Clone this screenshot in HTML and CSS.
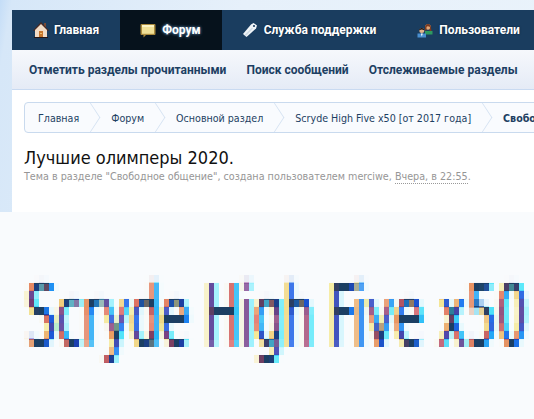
FILE: index.html
```html
<!DOCTYPE html>
<html lang="ru">
<head>
<meta charset="utf-8">
<title>Лучшие олимперы 2020.</title>
<link rel="stylesheet" href="styles.css">
</head>
<body>
<svg class="defs" width="0" height="0" aria-hidden="true">
  <filter id="mosaic" filterUnits="objectBoundingBox" x="0" y="0" width="100%" height="100%" color-interpolation-filters="sRGB">
    <feGaussianBlur in="SourceGraphic" stdDeviation="2.2 1" result="soft"/>
    <feOffset in="soft" dx="2" dy="0" result="rs"/>
    <feColorMatrix in="rs" type="matrix" values="1 0 0 0 0 0 0 0 0 0 0 0 0 0 0 0 0 0 0 1" result="r"/>
    <feColorMatrix in="soft" type="matrix" values="0 0 0 0 0 0 1 0 0 0 0 0 0 0 0 0 0 0 0 1" result="g"/>
    <feOffset in="soft" dx="-2" dy="0" result="bs"/>
    <feColorMatrix in="bs" type="matrix" values="0 0 0 0 0 0 0 0 0 0 0 0 1 0 0 0 0 0 0 1" result="b"/>
    <feComposite in="r" in2="g" operator="arithmetic" k1="0" k2="1" k3="1" k4="0" result="rg"/>
    <feComposite in="rg" in2="b" operator="arithmetic" k1="0" k2="1" k3="1" k4="0" result="rgb"/>
    <feFlood x="4" y="2" width="1" height="2" flood-color="#000" result="dot"/>
    <feComposite in="dot" x="2" y="-1" width="5" height="8" result="cell"/>
    <feTile in="cell" result="grid"/>
    <feComposite in="rgb" in2="grid" operator="in" result="samples"/>
    <feMorphology in="samples" operator="dilate" radius="2 3" result="blocks"/>
    <feFlood flood-color="#fff" result="paper"/>
    <feMerge result="flat"><feMergeNode in="paper"/><feMergeNode in="blocks"/></feMerge>
    <feComponentTransfer in="flat">
      <feFuncR type="table" tableValues="0.11 0.11 0.44 0.88 0.98"/>
      <feFuncG type="table" tableValues="0.25 0.25 0.54 0.91 0.985"/>
      <feFuncB type="table" tableValues="0.39 0.39 0.66 0.94 0.995"/>
    </feComponentTransfer>
  </filter>
</svg>

<div class="page">
  <nav class="tabs">
    <a class="tab">
      <svg class="ico ico-home" width="18" height="18" viewBox="0 0 18 18"><path d="M12 2h2v4h-2z" fill="#7a4a33"/><path d="M9 1 17 9.5 15.5 10 9 3.500 2.500 10 1 9.500z" fill="#4a2a22"/><path d="M3 9 9 3l6 6v7H3z" fill="#f2dcc6"/><path d="M7 10h4v6H7z" fill="#c8772d"/><path d="M8 12h2v1H8z" fill="#f0c070"/><path d="M2 16h14v1H2z" fill="#2a1612"/></svg>
      <span>Главная</span>
    </a>
    <a class="tab tab-on">
      <svg class="ico" width="16" height="16" viewBox="0 0 16 16"><path d="M1.500 2h13a1 1 0 0 1 1 1v9a1 1 0 0 1-1 1H6l-2.500 2.500V13H1.500a1 1 0 0 1-1-1V3a1 1 0 0 1 1-1z" fill="#a98a3d"/><path d="M2 3h12v8.800H2z" fill="#f0e096"/><path d="M2 3h12v2H2z" fill="#fbf3c4"/></svg>
      <span>Форум</span>
    </a>
    <a class="tab">
      <svg class="ico" width="16" height="16" viewBox="0 0 16 16"><path d="M11.500 1 15 3.500 14 6.500 4.500 15 1 12 9 2.500z" fill="#f1f5f8"/><path d="M2.500 13 10 5.500 11 6.500 4 14z" fill="#cfdbe4"/><circle cx="12" cy="4" r="1.100" fill="#1a3d5f"/></svg>
      <span>Служба поддержки</span>
    </a>
    <a class="tab">
      <svg class="ico" width="16" height="16" viewBox="0 0 16 16"><path d="M8 9h7.500v3.500H8z" fill="#2f9a5f"/><circle cx="11" cy="5" r="2.800" fill="#e3a878"/><path d="M8 5.500C8 1.500 13.500 0.500 14 5.500L14.500 9H12.500L13 5C11.500 4 10 4 9.500 5L9.500 8.500H8z" fill="#7a3a20"/><path d="M0.500 11.500h8.500V15.500H0.500z" fill="#4a90d0"/><path d="M3.800 11.500h2l-1 3z" fill="#fff"/><circle cx="4.800" cy="8.500" r="2.500" fill="#e3b48c"/><path d="M2 8.500C2 5 7.500 5 7.500 8.500L6.800 8C5.500 7.200 4 7.200 2.800 8z" fill="#1a1210"/></svg>
      <span>Пользователи</span>
    </a>
  </nav>
  <div class="subnav">
    <a>Отметить разделы прочитанными</a>
    <a>Поиск сообщений</a>
    <a>Отслеживаемые разделы</a>
  </div>
  <div class="panel">
    <ul class="crumbs">
      <li>Главная</li>
      <li>Форум</li>
      <li>Основной раздел</li>
      <li>Scryde High Five x50 [от 2017 года]</li>
      <li class="crumb-now">Свободное общение</li>
    </ul>
    <h1>Лучшие олимперы 2020.</h1>
    <p class="meta">Тема в разделе "Свободное общение", создана пользователем merciwe, <span class="when">Вчера, в 22:55</span>.</p>
  </div>
</div>
<div class="banner"><span class="banner-text">Scryde High Five x50</span></div>
</body>
</html>
```
FILE: styles.css
```css
html, body { margin: 0; padding: 0; height: 419px; overflow: hidden; }
body {
  width: 534px;
  background: linear-gradient(100deg, #c4ddf7 0, #d6e7f8 2%, #e6f0fa 40%, #eaf3fb 100%);
  font-family: "DejaVu Sans Condensed", "DejaVu Sans", sans-serif;
}
.defs { position: absolute; }
.page { padding: 10px 0 0 12px; }
.tabs { display: flex; height: 40px; background: #1a3d5f; white-space: nowrap; }
.tab {
  display: flex; align-items: center; gap: 6px; padding: 0 21px 0 20px;
  color: #fff; font: 700 12px Roboto, sans-serif;
  text-shadow: 0 0 2px #0b2238;
}
.ico-home { margin-right: -2px; }
.tab-on { background: #06121c; text-shadow: 0 0 3px #7fb6e8; }
.ico { flex: none; }
.subnav {
  display: flex; gap: 20px; align-items: center; height: 39px; padding-left: 17px;
  background: linear-gradient(#f6f8fc, #e5ebf6);
  border-bottom: 1px solid #c9daf1;
  font: 700 12px Roboto, sans-serif; color: #1d3f63; white-space: nowrap;
}
.panel { background: #fff; height: 110px; padding: 12px 0 0 12px; overflow: hidden; }
.crumbs {
  display: flex; list-style: none; margin: 0; padding: 0 0 0 2px; height: 29px;
  width: 700px; align-items: center; overflow: hidden;
  background: #f9fbfe; border: 1px solid #c9daee; border-radius: 4px;
  font-size: 10.6px; color: #1d3f63; white-space: nowrap;
}
.crumbs li { position: relative; padding: 0 21px 0 11px; }
.crumbs li::after {
  content: ""; position: absolute; right: -.5px; top: calc(50% - 11px); width: 21px; height: 21px;
  border-top: 1px solid #d3e1f1; border-right: 1px solid #d3e1f1;
  transform: scaleX(.66) rotate(45deg); transform-origin: center; box-sizing: border-box;
}
.crumbs .crumb-now { font-weight: 700; }
.crumb-now::after { display: none; }
h1 { margin: 14px 0 0; font-size: 18px; line-height: 22px; font-weight: 400; color: #111; }
.meta { margin: 1px 0 0; font-size: 10.7px; line-height: 14px; color: #969696; white-space: nowrap; }
.when { border-bottom: 1px dotted #999; }
.banner {
  height: 207px; width: 560px; margin-left: -13px; background: #fff; overflow: hidden;
  filter: url(#mosaic);
}
.banner-text {
  display: inline-block; margin: 53px 0 0 39px;
  font: 400 88px/100px "DejaVu Sans", sans-serif; color: #000; white-space: nowrap;
  transform: scaleX(.54); transform-origin: left top;
}
```
